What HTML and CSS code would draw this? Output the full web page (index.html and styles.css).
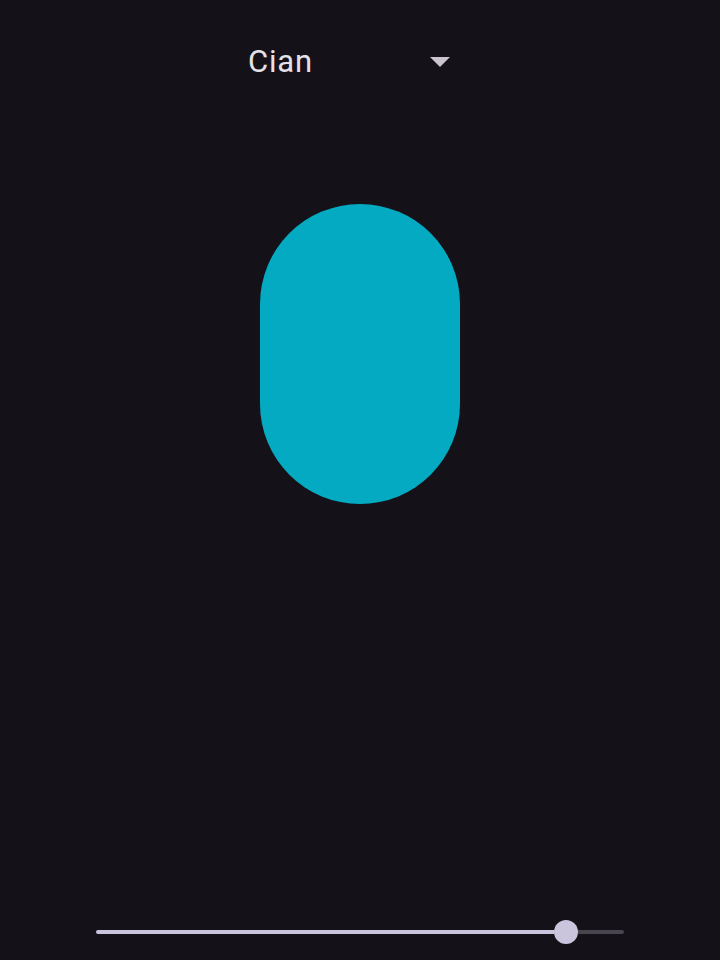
FILE: index.html
```html
<!DOCTYPE html>
<html>
<head>
<meta charset="utf-8">
<link rel="stylesheet" href="styles.css">
</head>
<body>
<div class="screen">
  <div class="dropdown">
    <span class="label">Cian</span>
    <span class="arrow"></span>
  </div>
  <div class="shape"></div>
  <div class="spacer"></div>
  <div class="slider">
    <div class="active"></div>
    <div class="thumb"></div>
    <div class="inactive"></div>
  </div>
</div>
</body>
</html>
```
FILE: styles.css
```css
html, body {
  margin: 0;
  padding: 0;
  background: #141218;
}
.screen {
  width: 720px;
  height: 960px;
  display: flex;
  flex-direction: column;
  align-items: center;
  font-family: Roboto, "Noto Sans", sans-serif;
}
.dropdown {
  margin-top: 40px;
  width: 222px;
  height: 44px;
  display: flex;
  align-items: center;
  justify-content: space-between;
  box-sizing: border-box;
}
.label {
  color: #e6e0e9;
  font-size: 31px;
  line-height: 44px;
  letter-spacing: 0.8px;
  margin-left: -1px;
}
.arrow {
  width: 0;
  height: 0;
  border-left: 10px solid transparent;
  border-right: 10px solid transparent;
  border-top: 10px solid #cac4d0;
  margin-right: 21px;
}
.shape {
  margin-top: 120px;
  width: 200px;
  height: 300px;
  border-radius: 100px;
  background: #04aac1;
}
.spacer {
  flex: 1;
}
.slider {
  width: 528px;
  height: 24px;
  margin-bottom: 16px;
  display: flex;
  align-items: center;
}
.active {
  width: 458px;
  height: 4px;
  background: #cac4dc;
  border-radius: 2px 0 0 2px;
}
.thumb {
  width: 24px;
  height: 24px;
  border-radius: 50%;
  background: #cac4dc;
  flex-shrink: 0;
}
.inactive {
  flex: 1;
  height: 4px;
  background: #49454f;
  border-radius: 0 2px 2px 0;
}
```
